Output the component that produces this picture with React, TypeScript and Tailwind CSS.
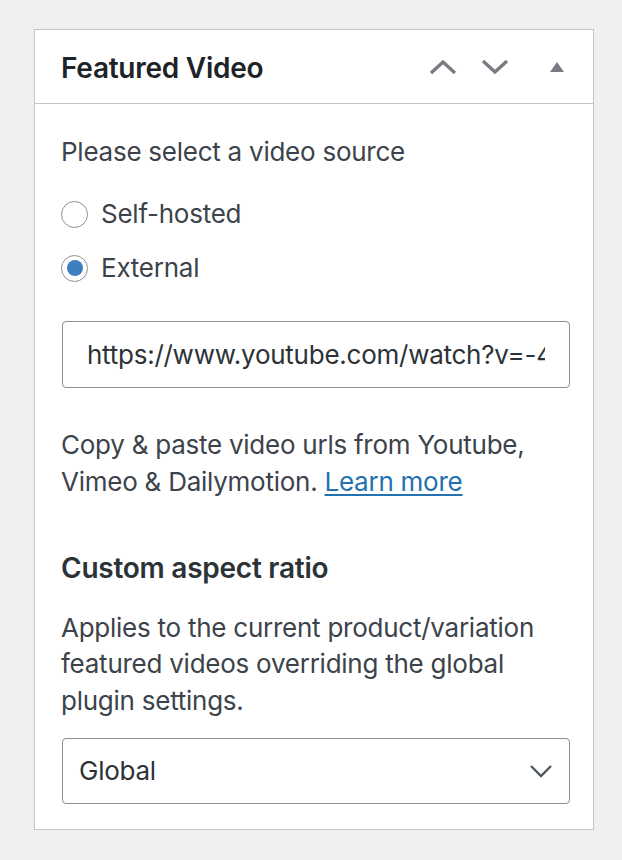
import { useState } from "react"

function Chevron({ dir }: { dir: "up" | "down" }) {
  return (
    <svg width="30" height="18" viewBox="0 0 30 18" fill="none">
      <path
        d={dir === "up" ? "M3 15 L15 4 L27 15" : "M3 3 L15 14 L27 3"}
        stroke="#787c82"
        strokeWidth="3.4"
      />
    </svg>
  )
}

function Radio({ checked, label, onClick }: { checked: boolean; label: string; onClick: () => void }) {
  return (
    <button onClick={onClick} className="flex items-center h-[36px] text-left">
      <span className="w-[27px] h-[27px] rounded-full border-[1.5px] border-[#8c8f94] bg-white flex items-center justify-center">
        {checked && <span className="w-[16px] h-[16px] rounded-full bg-[#3f7fc1]" />}
      </span>
      <span className="ml-[13px]">{label}</span>
    </button>
  )
}

export default function App() {
  const [source, setSource] = useState<"self" | "external">("external")

  return (
    <div
      className="min-h-[860px] bg-[#f0f0f1] pt-[29px] pl-[34px] text-[26px] leading-[36.4px] tracking-[-0.25px] text-[#3c434a]"
      style={{ fontFamily: "Inter, 'Noto Sans', sans-serif" }}
    >
      <div className="w-[560px] bg-white border border-[#c3c4c7]">
        <div className="h-[74px] border-b border-[#c3c4c7] flex items-center pl-[26px] pr-[26px] pt-[3px]">
          <h2 className="flex-1 text-[28px] font-semibold text-[#1d2327]">Featured Video</h2>
          <div className="flex items-center gap-[22px] mr-[17px] -mt-[3px]">
            <Chevron dir="up" />
            <Chevron dir="down" />
          </div>
          <svg width="16" height="12" viewBox="0 0 16 12" className="ml-[22px] mr-[2px] -mt-[3px]">
            <path d="M8 1 L15 11 L1 11 Z" fill="#787c82" />
          </svg>
        </div>

        <div className="px-[26px] pt-[30px] pb-[25px]">
          <p>Please select a video source</p>
          <div className="mt-[26px] flex flex-col gap-[18px]">
            <Radio checked={source === "self"} label="Self-hosted" onClick={() => setSource("self")} />
            <Radio checked={source === "external"} label="External" onClick={() => setSource("external")} />
          </div>

          <input
            defaultValue="https://www.youtube.com/watch?v=-4s2Xs-xh9Y"
            className="mt-[35px] w-[508px] h-[67px] ml-[1px] border-[1.5px] border-[#8c8f94] rounded-[4px] px-[24px] text-[#2c3338] outline-none"
          />

          <p className="mt-[38px] leading-[37px]">
            Copy &amp; paste video urls from Youtube, Vimeo &amp; Dailymotion.{" "}
            <a href="#" className="text-[#2271b1] underline underline-offset-[3px]">
              Learn more
            </a>
          </p>

          <h3 className="mt-[50px] text-[28px] font-semibold text-[#2c3338]">Custom aspect ratio</h3>
          <p className="mt-[23px]">
            Applies to the current product/variation featured videos overriding the global plugin settings.
          </p>

          <div className="mt-[19px] ml-[1px] w-[508px] h-[66px] border-[1.5px] border-[#8c8f94] rounded-[4px] flex items-center pl-[16px] pr-[16px] text-[#2c3338]">
            <span className="flex-1">Global</span>
            <svg width="24" height="14" viewBox="0 0 24 14" fill="none">
              <path d="M2 2 L12 12 L22 2" stroke="#50575e" strokeWidth="2.4" />
            </svg>
          </div>
        </div>
      </div>
    </div>
  )
}
